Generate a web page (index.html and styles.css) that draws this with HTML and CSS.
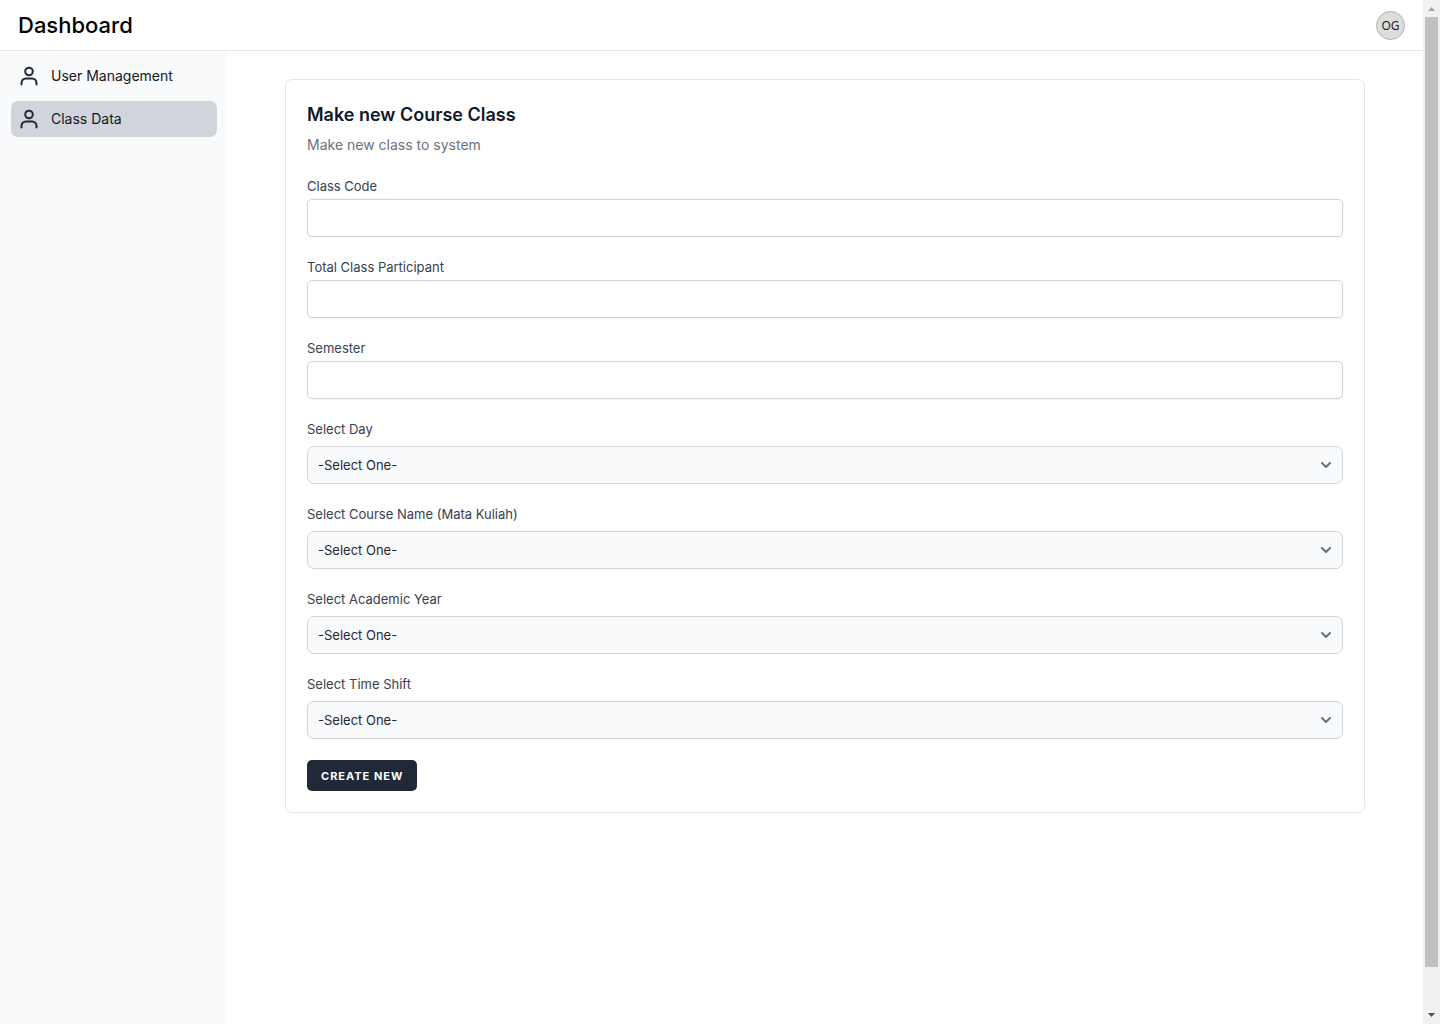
FILE: index.html
```html
<!DOCTYPE html>
<html lang="en">
<head>
<meta charset="utf-8">
<meta name="viewport" content="width=device-width, initial-scale=1">
<title>Dashboard</title>
<link rel="stylesheet" href="styles.css">
</head>
<body>
<div class="window">
  <div class="app">
    <header class="topbar">
      <h1 class="brand">Dashboard</h1>
      <button class="avatar" type="button">OG</button>
    </header>
    <div class="body">
      <nav class="sidebar">
        <a class="nav-link" href="#users">
          <svg class="nav-icon" viewBox="0 0 20 20" aria-hidden="true"><circle cx="10" cy="5.500" r="3.800"/><path d="M2.500 18.500v-1.500a4.500 4.500 0 0 1 4.500-4.500h6a4.500 4.500 0 0 1 4.500 4.500v1.500"/></svg>
          <span>User Management</span>
        </a>
        <a class="nav-link active" href="#classes">
          <svg class="nav-icon" viewBox="0 0 20 20" aria-hidden="true"><circle cx="10" cy="5.500" r="3.800"/><path d="M2.500 18.500v-1.500a4.500 4.500 0 0 1 4.500-4.500h6a4.500 4.500 0 0 1 4.500 4.500v1.500"/></svg>
          <span>Class Data</span>
        </a>
      </nav>
      <main class="content">
        <section class="card">
          <h2 class="card-title">Make new Course Class</h2>
          <p class="card-subtitle">Make new class to system</p>
          <form class="form">
            <div class="field">
              <label for="code">Class Code</label>
              <input class="control" id="code" type="text">
            </div>
            <div class="field">
              <label for="total">Total Class Participant</label>
              <input class="control" id="total" type="text">
            </div>
            <div class="field">
              <label for="semester">Semester</label>
              <input class="control" id="semester" type="text">
            </div>
            <div class="field field-select">
              <label for="day">Select Day</label>
              <div class="select-wrap">
                <select class="control select" id="day"><option>-Select One-</option></select>
                <svg class="chevron" viewBox="0 0 10 6" aria-hidden="true"><path d="m1 1 4 4 4-4"/></svg>
              </div>
            </div>
            <div class="field field-select">
              <label for="course">Select Course Name (Mata Kuliah)</label>
              <div class="select-wrap">
                <select class="control select" id="course"><option>-Select One-</option></select>
                <svg class="chevron" viewBox="0 0 10 6" aria-hidden="true"><path d="m1 1 4 4 4-4"/></svg>
              </div>
            </div>
            <div class="field field-select">
              <label for="year">Select Academic Year</label>
              <div class="select-wrap">
                <select class="control select" id="year"><option>-Select One-</option></select>
                <svg class="chevron" viewBox="0 0 10 6" aria-hidden="true"><path d="m1 1 4 4 4-4"/></svg>
              </div>
            </div>
            <div class="field field-select">
              <label for="shift">Select Time Shift</label>
              <div class="select-wrap">
                <select class="control select" id="shift"><option>-Select One-</option></select>
                <svg class="chevron" viewBox="0 0 10 6" aria-hidden="true"><path d="m1 1 4 4 4-4"/></svg>
              </div>
            </div>
            <button class="submit" type="submit">Create New</button>
          </form>
        </section>
      </main>
    </div>
  </div>
  <div class="scrollbar" aria-hidden="true">
    <svg class="arrow arrow-up" viewBox="0 0 17 17"><path d="M5 11h7L8.500 7z"/></svg>
    <div class="track"><div class="thumb"></div></div>
    <svg class="arrow" viewBox="0 0 17 17"><path d="M5 6h7l-3.500 4z"/></svg>
  </div>
</div>
</body>
</html>
```

FILE: styles.css
```css
*,
*::before,
*::after {
  box-sizing: border-box;
}

body {
  margin: 0;
  font-family: Inter, "Liberation Sans", sans-serif;
  color: #1f2937;
  background: #fff;
}

.window {
  display: flex;
  min-height: 100vh;
}

.app {
  flex: 1;
  min-width: 0;
  display: flex;
  flex-direction: column;
}

.topbar {
  display: flex;
  align-items: center;
  justify-content: space-between;
  padding: 10px 18px;
  border-bottom: 1px solid #e5e7eb;
}

.brand {
  margin: 0;
  font-size: 22px;
  line-height: 30px;
  font-weight: 500;
  color: #000;
}

.avatar {
  width: 29px;
  height: 29px;
  padding: 0;
  border: 1px solid #b3b3b3;
  border-radius: 50%;
  background: #ddd;
  font-family: "Noto Sans", sans-serif;
  font-size: 12px;
  font-weight: 400;
  color: #222;
}

.body {
  flex: 1;
  display: flex;
}

.sidebar {
  flex: 0 0 227px;
  display: flex;
  flex-direction: column;
  gap: 7px;
  padding: 7px 10px 0 11px;
  background: #f9fafb;
}

.nav-link {
  display: flex;
  align-items: center;
  gap: 12px;
  height: 36px;
  padding: 0 8px;
  border-radius: 7px;
  font-size: 14px;
  line-height: 20px;
  color: #111827;
  text-decoration: none;
}

.nav-link.active {
  background: #d1d5db;
}

.nav-icon {
  width: 20px;
  height: 20px;
  fill: none;
  stroke: #1f2937;
  stroke-width: 2;
  stroke-linecap: round;
}

.content {
  flex: 1;
  min-width: 0;
  padding: 28px 58px;
}

.card {
  padding: 21px;
  border: 1px solid #e5e7eb;
  border-radius: 7px;
}

.card-title {
  margin: 0 0 4px;
  font-size: 18px;
  line-height: 28px;
  font-weight: 600;
  color: #111827;
}

.card-subtitle {
  margin: 0 0 20px;
  font-size: 14px;
  line-height: 24px;
  color: #6b7280;
}

.form {
  display: flex;
  flex-direction: column;
  align-items: stretch;
  gap: 21px;
}

.field {
  display: flex;
  flex-direction: column;
  gap: 4px;
}

.field-select {
  gap: 8px;
}

.field label {
  font-size: 13px;
  line-height: 18px;
  color: #374151;
}

.control {
  display: block;
  width: 100%;
  height: 38px;
  padding: 0 10px;
  border: 1px solid #d1d5db;
  border-radius: 5px;
  background: #fff;
  box-shadow: 0 1px 2px rgb(0 0 0 / 5%);
  font-family: inherit;
  font-size: 13px;
  color: #1f2937;
}

.select {
  appearance: none;
  border-radius: 7px;
  background: #f9fafb;
  box-shadow: none;
}

.select-wrap {
  display: grid;
  align-items: center;
}

.select-wrap > * {
  grid-area: 1 / 1;
}

.chevron {
  justify-self: end;
  width: 10px;
  height: 6px;
  margin-right: 12px;
  fill: none;
  stroke: #6b7280;
  stroke-width: 2;
  stroke-linecap: round;
  stroke-linejoin: round;
  pointer-events: none;
}

.submit {
  align-self: flex-start;
  height: 31px;
  padding: 0 14px;
  border: 0;
  border-radius: 5px;
  background: #1f2937;
  color: #fff;
  font-family: inherit;
  font-size: 11px;
  font-weight: 700;
  letter-spacing: 1px;
  text-transform: uppercase;
}

.scrollbar {
  flex: 0 0 17px;
  display: flex;
  flex-direction: column;
  background: #f1f1f1;
}

.arrow {
  width: 17px;
  height: 17px;
  fill: #505050;
}

.arrow-up {
  fill: #a3a3a3;
}

.track {
  flex: 1;
  padding: 0 2px;
}

.thumb {
  height: 96%;
  background: #c1c1c1;
}
```
